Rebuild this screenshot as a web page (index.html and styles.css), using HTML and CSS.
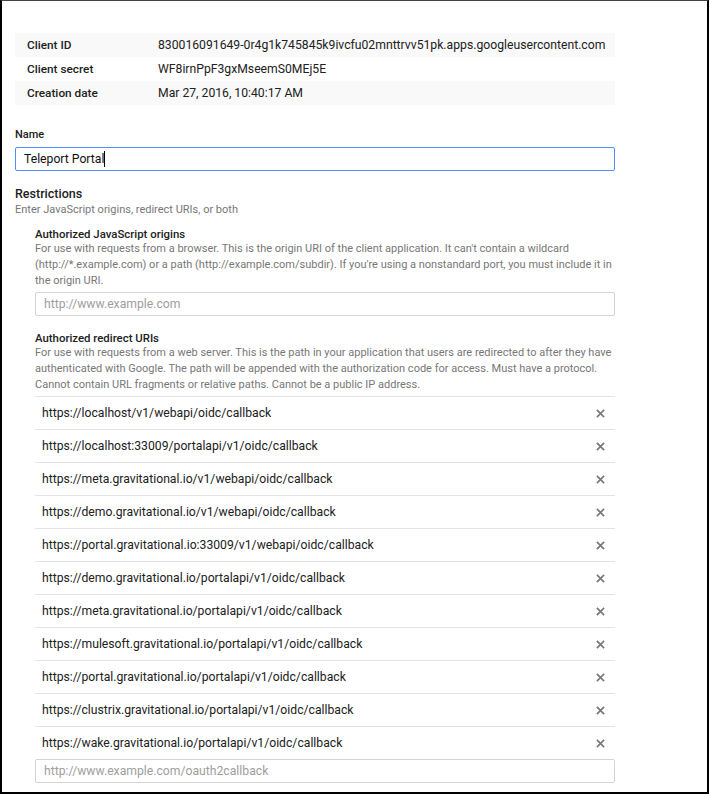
FILE: index.html
```html
<!DOCTYPE html>
<html>
<head>
<meta charset="utf-8">
<link rel="stylesheet" href="styles.css">
</head>
<body>
<div class="frame">
  <div class="content">
    <table class="info">
      <tr class="shaded"><th>Client ID</th><td>830016091649-0r4g1k745845k9ivcfu02mnttrvv51pk.apps.googleusercontent.com</td></tr>
      <tr><th>Client secret</th><td>WF8irnPpF3gxMseemS0MEj5E</td></tr>
      <tr class="shaded"><th>Creation date</th><td>Mar 27, 2016, 10:40:17 AM</td></tr>
    </table>

    <div class="field-label">Name</div>
    <div class="input focused"><span class="value">Teleport Portal</span><span class="caret"></span></div>

    <div class="section-title">Restrictions</div>
    <div class="section-sub">Enter JavaScript origins, redirect URIs, or both</div>

    <div class="sub">
      <div class="sub-title">Authorized JavaScript origins</div>
      <div class="desc">For use with requests from a browser. This is the origin URI of the client application. It can't contain a wildcard (http://*.example.com) or a path (http://example.com/subdir). If you're using a nonstandard port, you must include it in the origin URI.</div>
      <div class="input"><span class="placeholder">http://www.example.com</span></div>
    </div>

    <div class="sub sub2">
      <div class="sub-title">Authorized redirect URIs</div>
      <div class="desc">For use with requests from a web server. This is the path in your application that users are redirected to after they have authenticated with Google. The path will be appended with the authorization code for access. Must have a protocol. Cannot contain URL fragments or relative paths. Cannot be a public IP address.</div>
      <ul class="uris">
        <li><span>https://localhost/v1/webapi/oidc/callback</span><svg class="x" viewBox="0 0 10 10"><path d="M1 1L9 9M9 1L1 9"/></svg></li>
        <li><span>https://localhost:33009/portalapi/v1/oidc/callback</span><svg class="x" viewBox="0 0 10 10"><path d="M1 1L9 9M9 1L1 9"/></svg></li>
        <li><span>https://meta.gravitational.io/v1/webapi/oidc/callback</span><svg class="x" viewBox="0 0 10 10"><path d="M1 1L9 9M9 1L1 9"/></svg></li>
        <li><span>https://demo.gravitational.io/v1/webapi/oidc/callback</span><svg class="x" viewBox="0 0 10 10"><path d="M1 1L9 9M9 1L1 9"/></svg></li>
        <li><span>https://portal.gravitational.io:33009/v1/webapi/oidc/callback</span><svg class="x" viewBox="0 0 10 10"><path d="M1 1L9 9M9 1L1 9"/></svg></li>
        <li><span>https://demo.gravitational.io/portalapi/v1/oidc/callback</span><svg class="x" viewBox="0 0 10 10"><path d="M1 1L9 9M9 1L1 9"/></svg></li>
        <li><span>https://meta.gravitational.io/portalapi/v1/oidc/callback</span><svg class="x" viewBox="0 0 10 10"><path d="M1 1L9 9M9 1L1 9"/></svg></li>
        <li><span>https://mulesoft.gravitational.io/portalapi/v1/oidc/callback</span><svg class="x" viewBox="0 0 10 10"><path d="M1 1L9 9M9 1L1 9"/></svg></li>
        <li><span>https://portal.gravitational.io/portalapi/v1/oidc/callback</span><svg class="x" viewBox="0 0 10 10"><path d="M1 1L9 9M9 1L1 9"/></svg></li>
        <li><span>https://clustrix.gravitational.io/portalapi/v1/oidc/callback</span><svg class="x" viewBox="0 0 10 10"><path d="M1 1L9 9M9 1L1 9"/></svg></li>
        <li><span>https://wake.gravitational.io/portalapi/v1/oidc/callback</span><svg class="x" viewBox="0 0 10 10"><path d="M1 1L9 9M9 1L1 9"/></svg></li>
      </ul>
      <div class="input"><span class="placeholder">http://www.example.com/oauth2callback</span></div>
    </div>
  </div>
</div>
</body>
</html>
```
FILE: styles.css
```css
html, body {
  margin: 0;
  padding: 0;
  background: #fff;
}
body {
  font-family: Roboto, "Liberation Sans", Arial, sans-serif;
  color: #212121;
}
.frame {
  box-sizing: border-box;
  width: 709px;
  height: 794px;
  border-top: 1px solid #444;
  border-left: 2px solid #000;
  border-right: 2px solid #000;
  border-bottom: 2px solid #000;
  overflow: hidden;
}
.content {
  width: 600px;
  padding: 32px 0 0 13px;
}
.info {
  width: 600px;
  border-collapse: collapse;
  font-size: 12.2px;
}
.info tr {
  height: 24px;
}
.info tr.shaded {
  background: #f9f9f9;
}
.info th {
  text-align: left;
  font-weight: 500;
  font-size: 11.8px;
  width: 131px;
  padding: 0 0 0 12px;
}
.info td {
  padding: 0;
}
.field-label {
  margin-top: 22px;
  font-size: 11px;
  font-weight: 500;
  line-height: 16px;
}
.input {
  box-sizing: border-box;
  height: 24px;
  border: 1px solid #d4d4d4;
  border-radius: 2px;
  display: flex;
  align-items: center;
  padding-left: 8px;
  font-size: 12.2px;
  margin-top: 4px;
}
.input.focused {
  border-color: #4d90fe;
}
.value {
  color: #111;
}
.caret {
  display: inline-block;
  width: 1px;
  height: 16px;
  background: #000;
  margin-left: 0;
}
.placeholder {
  color: #9e9e9e;
}
.section-title {
  margin-top: 14px;
  font-size: 12.5px;
  font-weight: 500;
  line-height: 17px;
}
.section-sub {
  font-size: 11px;
  line-height: 16px;
  color: #777;
}
.sub {
  padding-left: 20px;
  margin-top: 9px;
}
.sub2 {
  margin-top: 15px;
}
.sub-title {
  font-size: 11.4px;
  font-weight: 500;
  line-height: 14px;
}
.desc {
  font-size: 11px;
  line-height: 16px;
  color: #777;
}
.sub .input {
  margin-top: 3px;
}
.uris {
  list-style: none;
  margin: 3px 0 0 0;
  padding: 0;
}
.uris li {
  box-sizing: border-box;
  height: 33px;
  border-top: 1px solid #e3e3e3;
  display: flex;
  align-items: center;
  justify-content: space-between;
  padding: 0 10px 0 7px;
  font-size: 12.2px;
  color: #212121;
}
.sub .uris + .input {
  margin-top: 0;
}
.x {
  width: 9px;
  height: 9px;
  stroke: #777;
  stroke-width: 1.8;
  fill: none;
}
```
